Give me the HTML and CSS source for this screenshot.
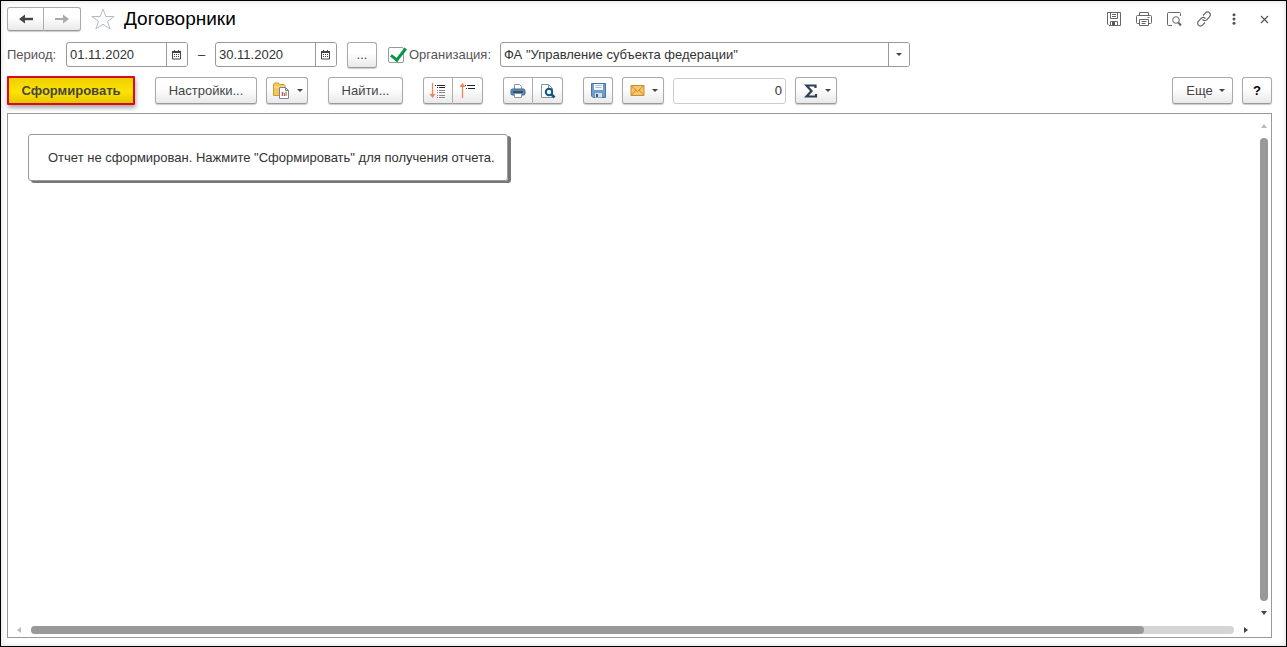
FILE: index.html
```html
<!DOCTYPE html>
<html lang="ru">
<head>
<meta charset="utf-8">
<title>Договорники</title>
<link rel="stylesheet" href="styles.css">
</head>
<body>
<main class="window">
  <header class="titlebar">
    <div class="joined nav">
      <button class="btn" aria-label="Назад"><svg width="16" height="12" viewBox="0 0 16 12"><path d="M4 6h11" stroke="#444" stroke-width="2.400"/><path d="M1 6l6-4.500v3L5.500 6 7 7.500v3z" fill="#444"/></svg></button>
      <button class="btn" aria-label="Вперед"><svg width="16" height="12" viewBox="0 0 16 12"><path d="M1 6h11" stroke="#aaa" stroke-width="2"/><path d="M15 6L9 1.500v3L10.500 6 9 7.500v3z" fill="#aaa"/></svg></button>
    </div>
    <button class="plain star" aria-label="В избранное"><svg width="24" height="22" viewBox="0 0 24 22"><path d="M12 1l2.800 7.500h8.400l-6.700 4.800 2.600 7.700-7.100-4.800L4.900 21l2.600-7.700L.8 8.500h8.400z" fill="#fff" stroke="#b4bcc4"/></svg></button>
    <h1 class="title">Договорники</h1>
    <div class="tools">
      <button class="plain" aria-label="Сохранить"><svg width="16" height="16" viewBox="0 0 16 16" fill="none" stroke="#666"><path d="M1.500 1.500h13v13H3l-1.500-1.500zM4.500 1.500v6h7v-6M6 3.500h4M6 5.500h4M4.500 14.500v-4h7v4"/><path d="M6 11h3v3H6z" fill="#555" stroke="none"/></svg></button>
      <button class="plain" aria-label="Печать"><svg width="18" height="16" viewBox="0 0 18 16" fill="none" stroke="#666"><path d="M4.500 4.500v-3h9v3M4.500 12.500h-2q-1 0-1-1v-6q0-1 1-1h13q1 0 1 1v6q0 1-1 1h-2M4.500 8.500h9v6h-9zM6.500 10.500h5M6.500 12.500h4M12.500 6.500h2"/></svg></button>
      <button class="plain" aria-label="Просмотр"><svg width="16" height="16" viewBox="0 0 16 16" fill="none" stroke="#666"><path d="M6 14.500H2.500q-1 0-1-1v-11q0-1 1-1h11q1 0 1 1V5"/><circle cx="10" cy="9" r="3.300"/><path d="M12.300 11.500l2.700 3" stroke-width="2"/></svg></button>
      <button class="plain" aria-label="Ссылка"><svg width="16" height="16" viewBox="0 0 16 16" fill="none" stroke="#666" stroke-width="1.200"><path d="M7 4.500l2.500-2.700a2.700 2.700 0 0 1 4 0 2.800 2.800 0 0 1 0 4L10.500 9q-2 1.500-4-.5M9 11.500l-2.500 2.700a2.700 2.700 0 0 1-4 0 2.800 2.800 0 0 1 0-4L5.500 7q2-1.500 4 .5"/></svg></button>
      <button class="plain" aria-label="Меню"><svg width="16" height="16" viewBox="0 0 16 16" fill="#555"><circle cx="8" cy="3.800" r="1.500"/><circle cx="8" cy="8" r="1.500"/><circle cx="8" cy="12.200" r="1.500"/></svg></button>
      <button class="plain" aria-label="Закрыть"><svg width="16" height="16" viewBox="0 0 16 16"><path d="M5 5l7 7M12 5l-7 7" stroke="#555" stroke-width="1.200"/></svg></button>
    </div>
  </header>

  <form class="filters">
    <label class="caption" for="from">Период:</label>
    <div class="field date">
      <input id="from" value="01.11.2020">
      <button type="button" class="pick" aria-label="Выбрать дату"><svg width="10" height="10" viewBox="0 0 10 10"><path d="M.5 1.500h8v7.500h-8z" fill="#fff" stroke="#444"/><path d="M0 1h9v2H0zM2 0h1v2H2zM6 0h1v2H6z" fill="#444"/><path d="M2 4.500h6M2 6.500h6" stroke="#444" stroke-dasharray="1 1"/></svg></button>
    </div>
    <span class="dash">–</span>
    <div class="field date">
      <input aria-label="Конец периода" value="30.11.2020">
      <button type="button" class="pick" aria-label="Выбрать дату"><svg width="10" height="10" viewBox="0 0 10 10"><path d="M.5 1.500h8v7.500h-8z" fill="#fff" stroke="#444"/><path d="M0 1h9v2H0zM2 0h1v2H2zM6 0h1v2H6z" fill="#444"/><path d="M2 4.500h6M2 6.500h6" stroke="#444" stroke-dasharray="1 1"/></svg></button>
    </div>
    <button type="button" class="btn small dots">...</button>
    <input type="checkbox" class="check" id="useorg" checked>
    <label class="caption org" for="useorg">Организация:</label>
    <div class="field company">
      <input aria-label="Организация" value="ФА &quot;Управление субъекта федерации&quot;">
      <button type="button" class="pick" aria-label="Выбрать"><i class="caret"></i></button>
    </div>
  </form>

  <div class="toolbar">
    <button class="btn primary">Сформировать</button>
    <div class="group">
      <button class="btn settings">Настройки...</button>
      <button class="btn drop" aria-label="Варианты отчета"><svg width="17" height="17" viewBox="0 0 17 17"><path d="M.5 13.500V2.500l1-1.500h4l1 1.500H11l1 1v10z" fill="#f3c75b" stroke="#d09a35"/><path d="M1 5h11" stroke="#ffe7a0"/><path d="M6.500 5.500h6l3 3v8h-9z" fill="#fff" stroke="#71879b"/><path d="M12.500 5.500v3h3" fill="none" stroke="#71879b"/><path d="M9.500 10v4" stroke="#e14b3b" stroke-width="1.500"/><path d="M11.500 11v3" stroke="#41a465"/><path d="M13 9.500V14" stroke="#e14b3b"/></svg><i class="caret"></i></button>
    </div>
    <button class="btn find">Найти...</button>
    <div class="joined">
      <button class="btn small" aria-label="Развернуть"><svg width="18" height="18" viewBox="0 0 18 18"><path d="M3.500 1v13" stroke="#f28355" stroke-width="1.300"/><path d="M.5 12h6l-3 4z" fill="#f28355"/><path d="M6 3.500h1M8 3.500h8M8 5.500h1M10 5.500h6" stroke="#222"/><path d="M8 8.500h1M10 8.500h6M8 10.500h1M10 10.500h6M8 13.500h1M10 13.500h6M8 15.500h1M10 15.500h6" stroke="#888"/></svg></button>
      <button class="btn small" aria-label="Свернуть"><svg width="18" height="18" viewBox="0 0 18 18"><path d="M3.500 16V3" stroke="#f28355" stroke-width="1.300"/><path d="M.5 5h6l-3-4z" fill="#f28355"/><path d="M6 3.500h1M8 3.500h8M7 6.500h1M9 6.500h7" stroke="#222"/></svg></button>
    </div>
    <div class="joined">
      <button class="btn small" aria-label="Печать"><svg width="16" height="16" viewBox="0 0 16 16"><path d="M4.500 6V1.500h5l2 2V6" fill="#fff" stroke="#8194a8"/><rect x="1" y="6" width="14" height="6" rx="1.500" fill="#6288b0" stroke="#3f6a94"/><path d="M3 9h10" stroke="#223e59" stroke-width="1.500"/><path d="M4.500 10.500h7v4h-7z" fill="#fff" stroke="#8194a8"/></svg></button>
      <button class="btn small" aria-label="Предварительный просмотр"><svg width="16" height="16" viewBox="0 0 16 16"><path d="M1.500 1.500h7l4 4v9h-11z" fill="#fff" stroke="#8296aa"/><path d="M8.500 1.500v4h4" fill="none" stroke="#8296aa"/><circle cx="9" cy="9" r="3.200" fill="#eef8ff" stroke="#175582" stroke-width="2"/><path d="M11.500 11.500l3 3" stroke="#175582" stroke-width="2.600"/></svg></button>
    </div>
    <div class="group">
      <button class="btn small" aria-label="Сохранить"><svg width="15" height="15" viewBox="0 0 15 15"><path d="M.5.500h14v14H2L.5 13z" fill="#6e9ccb" stroke="#4c769f"/><path d="M3 1h9v6H3z" fill="#f4f9ff"/><path d="M4.500 2.500h6M4.500 4.500h6" stroke="#a9bccf"/><path d="M4 10h7v4.500H4z" fill="#d5dde5"/><path d="M5 11h2v3H5z" fill="#365b80"/></svg></button>
      <button class="btn drop" aria-label="Отправить"><svg width="15" height="11" viewBox="0 0 14 11"><path d="M.5.500h13v10H.5z" fill="#f8c569" stroke="#c88b32"/><path d="M1 1l6 5.500L13 1M1 10l4.500-5M13 10L8.500 5" fill="none" stroke="#c88b32"/></svg><i class="caret"></i></button>
      <input class="total" aria-label="Сумма" value="0">
      <button class="btn drop" aria-label="Функция"><svg width="14" height="14" viewBox="0 0 13 14"><path d="M11 4V1.500H2L7 7l-5 5.500h9.500V10" fill="none" stroke="#2f4150" stroke-width="2.200"/></svg><i class="caret"></i></button>
    </div>
    <div class="group end">
      <button class="btn more">Еще <i class="caret"></i></button>
      <button class="btn small help">?</button>
    </div>
  </div>

  <section class="report">
    <div class="sheet"><p class="message">Отчет не сформирован. Нажмите "Сформировать" для получения отчета.</p></div>
    <div class="vscroll"><i class="up"></i><div class="track"></div><i class="down"></i></div>
    <div class="hscroll"><i class="left"></i><div class="track"><div class="thumb"></div></div><i class="right"></i></div>
  </section>
</main>
</body>
</html>
```
FILE: styles.css
```css
* { box-sizing: border-box; }
body { margin: 0; background: #fff; color: #333; font: 13px/16px "Liberation Sans", Arial, sans-serif; }
button, input { font: inherit; color: inherit; margin: 0; padding: 0; }
svg { display: block; flex: none; }

.window { display: flex; flex-direction: column; height: 100vh; padding: 6px 14px 8px 6px; border: 1px solid #000; box-shadow: inset 0 0 6px #ddd; }
.titlebar, .filters, .toolbar, .tools, .group, .joined, .field { display: flex; align-items: center; }
.titlebar { height: 24px; }
.filters { height: 25px; margin-top: 11px; }
.toolbar { gap: 20px; height: 27px; margin-top: 10px; }
.group { gap: 9px; }
.end { margin-left: auto; }

.btn { display: flex; align-items: center; justify-content: center; height: 27px; border: 1px solid #aaa; border-bottom-color: #999; border-radius: 3px; background: linear-gradient(#fff 40%, #e9e9e9); box-shadow: 0 1px 1px #ccc; color: #444; white-space: nowrap; }
.small { width: 30px; }
.drop { width: 42px; gap: 7px; padding-left: 2px; }
.joined .btn:first-child { border-radius: 3px 0 0 3px; }
.joined .btn + .btn { border-left: 0; border-radius: 0 3px 3px 0; }
.nav .btn { width: 37px; height: 24px; }
.plain { display: flex; align-items: center; justify-content: center; border: 0; background: none; }
.star { margin: 0 9px 0 10px; }
.title { margin: 0; color: #000; font-size: 19px; line-height: 24px; font-weight: 400; }
.tools { margin-left: auto; gap: 12px; margin-right: -1px; }
.tools .plain { width: 18px; height: 18px; }

.caption { color: #555; white-space: nowrap; }
.filters > .caption:first-child { width: 59px; }
.field { height: 25px; border: 1px solid #999; border-radius: 3px; background: #fff; overflow: hidden; }
.field input { flex: 1; min-width: 0; height: 22px; padding: 0 3px; border: 0; background: none; align-self: flex-start; }
.date { width: 122px; }
.pick { display: flex; align-items: center; justify-content: center; width: 21px; height: 23px; border: 0; border-left: 1px solid #999; background: #fff; }
.dash { width: 27px; text-align: center; }
.dots { height: 26px; margin: 0 11px 0 10px; }
.check { appearance: none; width: 16px; height: 16px; border: 1px solid #999; border-radius: 2px; background: #fff; position: relative; }
.check:checked::after { content: ""; position: absolute; left: 5px; top: -3px; width: 6px; height: 13px; border: solid #079447; border-width: 0 3px 3px 0; transform: rotate(38deg); }
.org { width: 91px; margin-left: 5px; }
.company { width: 410px; }

.caret { width: 0; height: 0; border: 3px solid transparent; border-top-color: #444; border-bottom: 0; }
.primary { width: 128px; height: 29px; border: 2px solid #d9091e; border-radius: 1px; background: linear-gradient(#eed000, #ffe300 55%, #e5c600); box-shadow: 1px 3px 4px #aaa; color: #444; font-weight: 700; }
.settings { width: 102px; }
.find { width: 75px; }
.total { width: 113px; height: 26px; padding: 0 3px; border: 1px solid #ccc; border-radius: 3px; background: #fff; text-align: right; }
.more { width: 61px; gap: 6px; padding-left: 6px; }
.help { color: #000; font-weight: 700; }

.report { display: grid; grid-template: minmax(0, 1fr) 15px / minmax(0, 1fr) 15px; flex: 1; min-height: 0; margin-top: 9px; border: 1px solid #999; background: #fff; }
.sheet { padding: 20px; }
.message { width: fit-content; margin: 0; padding: 15px 12px 14px 19px; border: 1px solid #999; border-radius: 3px; box-shadow: 3px 2px 0 #777; }
.vscroll, .hscroll { display: flex; align-items: center; }
.vscroll { flex-direction: column; padding: 10px 0 7px; gap: 10px; }
.vscroll .track { flex: 1; width: 8px; border-radius: 4px; background: #999; }
.hscroll { padding: 0 8px 0 9px; gap: 10px; }
.hscroll .track { flex: 1; height: 8px; border-radius: 4px; background: #d5d5d5; }
.thumb { width: 92.5%; height: 8px; border-radius: 4px; background: #999; }
.up, .down, .left, .right { border: 3px solid transparent; }
.up { border-top: 0; border-bottom: 4px solid #bbb; }
.down { border-bottom: 0; border-top: 4px solid #444; }
.left { border-left: 0; border-right: 4px solid #bbb; }
.right { border-right: 0; border-left: 4px solid #444; }
```
